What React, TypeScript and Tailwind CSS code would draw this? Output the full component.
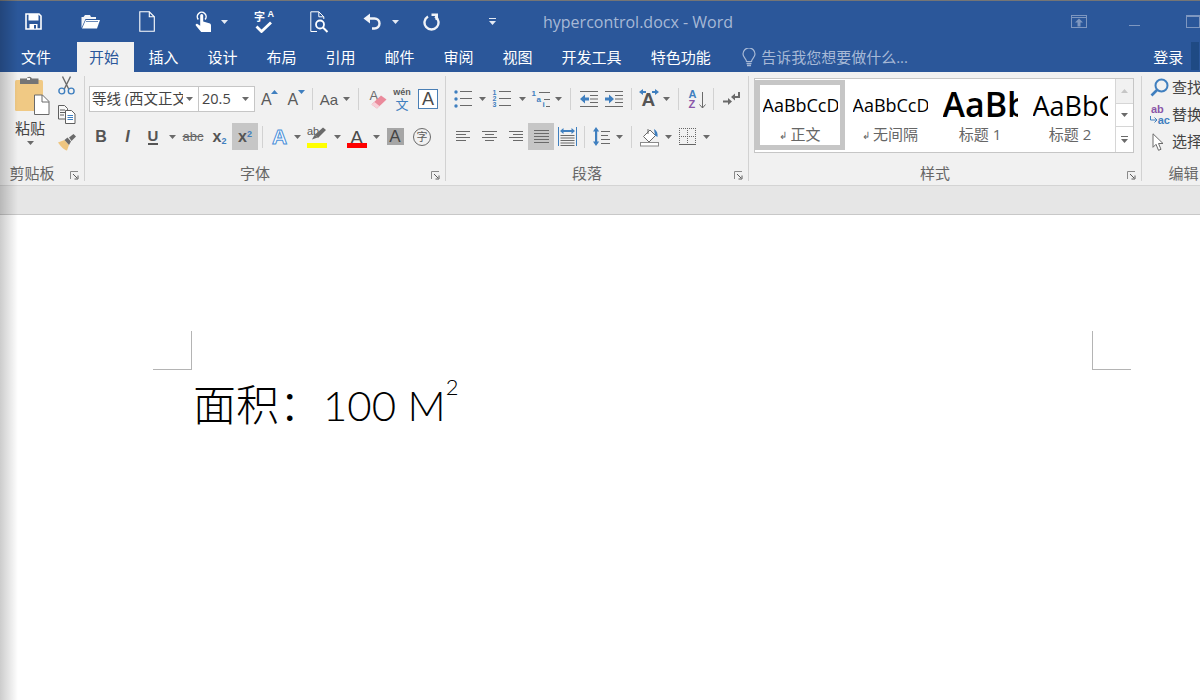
import React from 'react';

const Caret = ({ light = false }: { light?: boolean }) => (
  <svg className="shrink-0" width="7" height="4" viewBox="0 0 7 4"><path d="M0 0h7L3.500 4z" fill={light ? '#e4eaf4' : '#6a6a6a'} /></svg>
);

const Sep = ({ className }: { className: string }) => (
  <div className={`flex h-[26px] items-center justify-center ${className}`}>
    <div className="h-[22px] w-px bg-[#d2d2d2]" />
  </div>
);

const Cell = ({ className, children }: { className: string; children?: React.ReactNode }) => (
  <div className={`flex h-full shrink-0 items-center justify-center ${className}`}>{children}</div>
);

const Launcher = () => (
  <svg width="9" height="9" viewBox="0 0 9 9" fill="none">
    <path d="M0.500 8V0.500H8" stroke="#8a8a8a" />
    <path d="M3 3l4 4M8 4.500V8H4.500" stroke="#5a5a5a" />
  </svg>
);

// strokes for the paragraph alignment and list icons
const Lines = ({ rows, w = 18, h = 16 }: { rows: number[][]; w?: number; h?: number }) => (
  <svg width={w} height={h} viewBox={`0 0 ${w} ${h}`}>
    {rows.map((r, i) => (
      <rect key={i} x={r[0]} y={r[2]} width={r[1] - r[0]} height="1" fill="#6a6a6a" />
    ))}
  </svg>
);

const SaveIcon = () => (
  <svg width="17" height="17" viewBox="0 0 17 17" fill="none">
    <path d="M1 1h13l2 2v13H1z" stroke="#fff" strokeWidth="1.600" />
    <rect x="3.500" y="1" width="10" height="6.500" fill="#fff" />
    <rect x="4.500" y="11" width="8" height="5" fill="#fff" />
    <rect x="9" y="12" width="2" height="3.500" fill="#2b579a" />
  </svg>
);

const OpenIcon = () => (
  <svg width="19" height="15" viewBox="0 0 19 15">
    <path d="M0.500 14V3h2l1.500-2h5l1 2h5v2H4.500z" fill="#f2f4f8" />
    <path d="M1 14.500l3.800-8.500H19l-3 8.500z" fill="#fff" />
    <path d="M5 7.500h12" stroke="#2b579a" strokeWidth="0.700" />
  </svg>
);

const NewIcon = () => (
  <svg width="16" height="21" viewBox="0 0 16 21" fill="none">
    <path d="M0.800 0.800h9.500l5 5v14.400H0.800z" stroke="#fff" strokeWidth="1.100" />
    <path d="M10.300 0.800v5h5" stroke="#fff" strokeWidth="1.100" />
  </svg>
);

const TouchIcon = () => (
  <svg width="17" height="22" viewBox="0 0 17 22" fill="none">
    <path d="M3.300 8.500a4.400 4.400 0 1 1 6.800 0" stroke="#fff" strokeWidth="1.500" />
    <path d="M5.200 4.500a1.500 1.500 0 0 1 3 0v6l6 1.800c1.200.4 1.800 1 1.800 2.200V21H6.200L0.800 14.500c-.5-1 .6-2.200 1.700-1.500l2.700 1.800z" fill="#fff" />
  </svg>
);

const SpellIcon = () => (
  <div className="relative h-[22px] w-[19px] text-white">
    <span className="absolute left-0 top-0 text-[11px] font-bold leading-none">字</span>
    <span className="absolute right-[-1px] top-[-1px] font-['Liberation_Sans',sans-serif] text-[9px] font-bold leading-none">A</span>
    <svg className="absolute bottom-0 left-[1px]" width="17" height="12" viewBox="0 0 17 12" fill="none">
      <path d="M1.500 5.500l5 5L16 1.500" stroke="#fff" strokeWidth="2.800" />
    </svg>
  </div>
);

const PreviewIcon = () => (
  <svg width="19" height="22" viewBox="0 0 19 22" fill="none">
    <path d="M7 20.500H0.800V0.800h8l5 5V8M8.800 0.800v5h5" stroke="#fff" strokeWidth="1" />
    <circle cx="10" cy="13.500" r="4" stroke="#fff" strokeWidth="1.800" />
    <path d="M13 16.500l4.500 4.500" stroke="#fff" strokeWidth="2" />
  </svg>
);

const UndoIcon = () => (
  <svg width="19" height="17" viewBox="0 0 19 17" fill="none">
    <path d="M3 5.500h8.500a5 5 0 0 1 0 10H9" stroke="#f0f3f8" strokeWidth="2.400" />
    <path d="M7 0.500v10L0.500 5.500z" fill="#f0f3f8" />
  </svg>
);

const RedoIcon = () => (
  <svg width="18" height="18" viewBox="0 0 18 18" fill="none">
    <path d="M5 3.500a7 7 0 1 0 7 0" stroke="#f0f3f8" strokeWidth="2.400" />
    <path d="M9 0.500h6.500v6.500H13V3H9z" fill="#f0f3f8" transform="translate(-0.500 0)" />
  </svg>
);

const CustomizeIcon = ({ color }: { color: string }) => (
  <svg width="7" height="7" viewBox="0 0 7 7"><rect width="7" height="1" fill={color} /><path d="M0 3h7L3.500 7z" fill={color} /></svg>
);

const PasteIcon = () => (
  <svg width="36" height="39" viewBox="0 0 36 39">
    <rect x="0" y="4" width="28" height="31" rx="1.500" fill="#f0c984" />
    <path d="M5 5V2.500h6.500a3 3 0 0 1 5.500 0H23.500V8H5z" fill="#757575" />
    <rect x="12" y="2" width="3" height="2" fill="#f1f1f1" />
    <path d="M19.500 19h8l6.500 6.500V38.500H19.500z" fill="#fff" stroke="#6a6a6a" />
    <path d="M27 19v7h7" fill="none" stroke="#6a6a6a" />
  </svg>
);

const CutIcon = () => (
  <svg width="17" height="19" viewBox="0 0 17 19" fill="none">
    <path d="M4.500 0.500l6.200 12.500M12.500 0.500L6.300 13" stroke="#6a6a6a" strokeWidth="1.400" />
    <circle cx="3.800" cy="15" r="2.900" stroke="#3f7fbf" strokeWidth="1.400" />
    <circle cx="13.200" cy="15" r="2.900" stroke="#3f7fbf" strokeWidth="1.400" />
  </svg>
);

const CopyIcon = () => (
  <svg width="18" height="19" viewBox="0 0 18 19" fill="none">
    <path d="M0.500 0.500h6l3 3V14H0.500z" fill="#f7f7f7" stroke="#5f5f5f" />
    <path d="M2 5h5M2 7.500h5M2 10h4" stroke="#5f5f5f" />
    <path d="M7.500 5.500h6l3.500 3.500V18.500H7.500z" fill="#fff" stroke="#5f5f5f" />
    <path d="M9.500 10.500h5.500M9.500 12.500h5.500M9.500 14.500h5.500" stroke="#3f7fbf" />
  </svg>
);

const PainterIcon = () => (
  <svg width="18" height="17" viewBox="0 0 18 17">
    <path d="M0 8.500l6.500-2.500 4.500 5-2 5.500C6 16 2.500 12 0 8.500z" fill="#efc680" />
    <path d="M6.500 6l3-2.500 3.500 4L11 11z" fill="#6a6a6a" />
    <path d="M11 3.500L15.500 0 18 2.500 13.500 7z" fill="#6a6a6a" />
  </svg>
);

const Letter = ({ className, children }: { className: string; children: React.ReactNode }) => (
  <span className={`font-['Liberation_Sans',sans-serif] leading-none ${className}`}>{children}</span>
);

const GrowA = ({ grow }: { grow: boolean }) => (
  <div className="relative h-[18px] w-[15px]">
    <Letter className="absolute bottom-0 left-0 text-[16px] text-[#5a5a5a]">A</Letter>
    <svg className="absolute right-[-2px] top-0" width="7" height="4" viewBox="0 0 7 4">
      <path d={grow ? 'M0 4h7L3.500 0z' : 'M0 0h7L3.500 4z'} fill="#3f7fbf" />
    </svg>
  </div>
);

const ClearIcon = () => (
  <div className="relative h-[20px] w-[16px]">
    <Letter className="absolute left-0 top-0 text-[13px] text-[#6a6a6a]">A</Letter>
    <svg className="absolute bottom-0 left-[1px]" width="16" height="14" viewBox="0 0 16 14">
      <path d="M0.500 9.500L10 0.500l5.500 4L6 13.500z" fill="#ea8a9b" />
      <path d="M0.500 9.500L3.500 7l5 4L6 13.500z" fill="#f7d0d8" />
    </svg>
  </div>
);

const WenIcon = () => (
  <div className="flex h-[22px] w-[18px] flex-col items-center leading-none">
    <span className="font-['Liberation_Sans',sans-serif] text-[9px] font-bold text-[#5a5a5a]">wén</span>
    <span className="mt-[1px] text-[13px] text-[#3f7fbf]">文</span>
  </div>
);

const EffectA = () => (
  <span className="font-['Liberation_Sans',sans-serif] text-[21px] font-bold leading-none text-white [-webkit-text-stroke:1px_#4a90d9]">A</span>
);

const HighlightIcon = () => (
  <div className="relative h-[22px] w-[20px]">
    <Letter className="absolute left-0 top-0 text-[11px] text-[#5a5a5a]">ab</Letter>
    <svg className="absolute left-[4px] top-[1px]" width="16" height="14" viewBox="0 0 16 14">
      <path d="M3.500 8L12 0.500l3 2.500-8 8z" fill="#6a6a6a" />
      <path d="M1 12.500l2.500-4.500 3 2.500z" fill="#6a6a6a" />
    </svg>
    <div className="absolute bottom-0 h-[5px] w-full bg-[#ffff00]" />
  </div>
);

const ColorA = () => (
  <div className="relative h-[22px] w-[20px] text-center">
    <Letter className="text-[19px] text-[#4a4a4a]">A</Letter>
    <div className="absolute bottom-0 h-[5px] w-full bg-[#ff0000]" />
  </div>
);

const CircleChar = () => (
  <div className="flex h-[18px] w-[18px] items-center justify-center rounded-full border border-[#6a6a6a] text-[11px] leading-none text-[#5a5a5a]">字</div>
);

const BulletList = () => (
  <svg width="19" height="18" viewBox="0 0 19 18">
    {[2, 9, 16].map((y) => (
      <g key={y}>
        <circle cx="2" cy={y} r="1.700" fill="#3f7fbf" />
        <rect x="6" y={y - 1} width="12" height="1" fill="#6a6a6a" />
      </g>
    ))}
  </svg>
);

const NumberList = () => (
  <div className="flex h-[18px] w-[19px] items-stretch">
    <div className="flex w-[6px] flex-col justify-between font-['Liberation_Sans',sans-serif] text-[7px] font-bold leading-[6px] text-[#3f7fbf]">
      <span>1</span><span>2</span><span>3</span>
    </div>
    <Lines w={13} h={18} rows={[[0, 12, 1], [0, 12, 8], [0, 12, 15]]} />
  </div>
);

const MultiList = () => (
  <div className="relative h-[19px] w-[19px] font-['Liberation_Sans',sans-serif] text-[8px] font-bold leading-none">
    <span className="absolute left-0 top-0 text-[#3f7fbf]">1</span>
    <span className="absolute left-[5px] top-[6px] text-[#3f7fbf]">a</span>
    <span className="absolute left-[11px] top-[11px] text-[#3f7fbf]">i</span>
    <div className="absolute left-[7px] top-[2px] h-px w-[11px] bg-[#6a6a6a]" />
    <div className="absolute left-[12px] top-[9px] h-px w-[6px] bg-[#6a6a6a]" />
    <div className="absolute left-[14px] top-[16px] h-px w-[4px] bg-[#6a6a6a]" />
  </div>
);

const IndentIcon = ({ inc }: { inc: boolean }) => (
  <svg width="18" height="17" viewBox="0 0 18 17">
    <rect x="0" y="0" width="18" height="1" fill="#6a6a6a" />
    <rect x="0" y="15" width="18" height="1" fill="#6a6a6a" />
    {[4, 7.500, 11].map((y) => <rect key={y} x="10" y={y} width="8" height="1" fill="#6a6a6a" />)}
    <path
      d={inc ? 'M0 6.500h4V3.500L9 8l-5 4.500V9.500H0z' : 'M9 6.500H5V3.500L0 8l5 4.500V9.500h4z'}
      fill="#3f7fbf"
    />
  </svg>
);

const DirectionIcon = () => (
  <div className="relative h-[20px] w-[20px]">
    <svg className="absolute left-0 top-0" width="20" height="8" viewBox="0 0 20 8">
      <path d="M0 3l4-3v2h3v2H4v2zM20 3l-4-3v2h-3v2h3v2z" fill="#3f7fbf" />
    </svg>
    <Letter className="absolute bottom-0 left-[3px] text-[19px] font-bold text-[#555]">A</Letter>
  </div>
);

const SortIcon = () => (
  <div className="relative h-[20px] w-[17px] font-['Liberation_Sans',sans-serif] text-[11px] font-bold leading-[10px]">
    <div className="text-[#3f7fbf]">A</div>
    <div className="text-[#8a56a8]">Z</div>
    <svg className="absolute right-0 top-[3px]" width="7" height="17" viewBox="0 0 7 17" fill="none">
      <path d="M3.500 0v16M0.500 12.500l3 3.500 3-3.500" stroke="#6a6a6a" />
    </svg>
  </div>
);

const MarksIcon = () => (
  <svg width="17" height="14" viewBox="0 0 17 14" fill="none">
    <path d="M16 0v5H9" stroke="#6a6a6a" strokeWidth="2" />
    <path d="M12 1.500v7L8 5zM0 8.500h5V6l4 3.500L5 13v-2.500H0z" fill="#6a6a6a" />
  </svg>
);

const JustifyLines = ({ rows }: { rows: number[][] }) => <Lines w={15} h={13} rows={rows} />;

const DistributedIcon = () => (
  <svg width="19" height="19" viewBox="0 0 19 19">
    <rect x="0" y="0" width="1" height="19" fill="#3f7fbf" />
    <rect x="18" y="0" width="1" height="19" fill="#3f7fbf" />
    <path d="M2 4l3.500-3v2h8V1L17 4l-3.500 3V5h-8v2z" fill="#3f7fbf" />
    {[8, 10.500, 13, 15.500, 18].map((y) => <rect key={y} x="2.500" y={y} width="14" height="1" fill="#6a6a6a" />)}
  </svg>
);

const SpacingIcon = () => (
  <svg width="17" height="19" viewBox="0 0 17 19">
    <path d="M3 0l3.200 4.500H4.200v10h2L3 19 0 14.500h2v-10H0z" fill="#3f7fbf" />
    {[4, 8, 12, 16].map((y) => <rect key={y} x="8" y={y} width={y === 8 ? 7 : 9} height="1" fill="#6a6a6a" />)}
  </svg>
);

const ShadingIcon = () => (
  <svg width="19" height="20" viewBox="0 0 19 20" fill="none">
    <path d="M3.500 9.500L10 3l5.500 5.500L9 15z" fill="#fff" stroke="#6a6a6a" />
    <path d="M8 2v5" stroke="#6a6a6a" />
    <path d="M14 2c3 1.500 4 4.500 3.500 8L15 8.500z" fill="#3f7fbf" />
    <rect x="0.500" y="15.500" width="18" height="3.500" fill="#fff" stroke="#8a8a8a" />
  </svg>
);

const BordersIcon = () => (
  <svg width="17" height="17" viewBox="0 0 17 17" fill="none">
    <path d="M0.500 0V16M8.500 0V16M16.500 0V16M0 0.500H17M0 8.500H17" stroke="#666" strokeDasharray="1 1" />
    <path d="M0 16.500H17" stroke="#666" />
  </svg>
);

const SearchIcon = () => (
  <svg className="shrink-0" width="19" height="19" viewBox="0 0 19 19" fill="none">
    <circle cx="11.500" cy="7.500" r="6" stroke="#3f7fbf" strokeWidth="2" />
    <path d="M7 12L1.500 17.500" stroke="#3f7fbf" strokeWidth="2.600" />
  </svg>
);

const ReplaceIcon = () => (
  <div className="relative h-[20px] w-[20px] shrink-0 font-['Liberation_Sans',sans-serif] text-[11px] font-bold leading-[9px]">
    <span className="absolute left-[1px] top-0 text-[#8a56a8]">ab</span>
    <span className="absolute bottom-0 right-0 text-[#3f7fbf]">ac</span>
    <svg className="absolute bottom-[1px] left-0" width="8" height="8" viewBox="0 0 8 8" fill="none">
      <path d="M0.500 0v4H7M4.500 1.500L7 4 4.500 6.500" stroke="#3f7fbf" />
    </svg>
  </div>
);

const CursorIcon = () => (
  <svg className="shrink-0" width="13" height="18" viewBox="0 0 13 18" fill="none">
    <path d="M1 0.800v13.500l3-3 2.500 6 2.500-1-2.500-5.800h4.500z" fill="#fff" stroke="#6a6a6a" />
  </svg>
);

const Group = ({
  className,
  label,
  launcher = true,
  children,
}: {
  className: string;
  label: string;
  launcher?: boolean;
  children: React.ReactNode;
}) => (
  <div className={`mt-[4px] flex h-[105px] shrink-0 flex-col border-r border-[#d2d2d2] ${className}`}>
    <div className="h-[89px] overflow-hidden">{children}</div>
    <div className="relative h-[16px] pr-[20px] text-center text-[15px] leading-[16px] text-[#666]">
      {label}
      {launcher && (
        <div className="absolute bottom-[1px] right-[5px] flex">
          <Launcher />
        </div>
      )}
    </div>
  </div>
);

const StyleItem = ({
  preview,
  label,
  selected = false,
}: {
  preview: React.ReactNode;
  label: React.ReactNode;
  selected?: boolean;
}) => (
  <div className={`flex h-[70px] w-[90px] shrink-0 flex-col items-center bg-white ${selected ? 'border-[5px] border-[#c6c6c6]' : 'border-[5px] border-white'}`}>
    <div className="flex h-[39px] w-[75px] items-center overflow-hidden whitespace-nowrap">{preview}</div>
    <div className="flex h-[21px] items-center gap-[3px] text-[15px] leading-none text-[#666]">{label}</div>
  </div>
);

const App: React.FC = () => {
  const tabs = ['插入', '设计', '布局', '引用', '邮件', '审阅', '视图', '开发工具', '特色功能'];

  return (
    <div className="relative h-[700px] w-[1200px] overflow-hidden bg-white font-['Open_Sans','Noto_Sans_CJK_SC',sans-serif]">
      {/* title bar */}
      <div className="h-[72px] border-t border-[#757575] bg-[#2b579a]">
        <div className="flex h-[41px] items-center">
          <Cell className="ml-[24px] w-[18px]"><SaveIcon /></Cell>
          <Cell className="ml-[39px] w-[19px]"><OpenIcon /></Cell>
          <Cell className="ml-[39px] w-[16px]"><NewIcon /></Cell>
          <Cell className="ml-[40px] w-[17px]"><TouchIcon /></Cell>
          <Cell className="ml-[9px] w-[7px]"><Caret light /></Cell>
          <Cell className="ml-[26px] w-[19px]"><SpellIcon /></Cell>
          <Cell className="ml-[37px] w-[19px]"><PreviewIcon /></Cell>
          <Cell className="ml-[34px] w-[19px]"><UndoIcon /></Cell>
          <Cell className="ml-[10px] w-[7px]"><Caret light /></Cell>
          <Cell className="ml-[24px] w-[18px]"><RedoIcon /></Cell>
          <Cell className="ml-[48px] w-[7px]"><CustomizeIcon color="#e4eaf4" /></Cell>
          <div className="ml-[47px] w-[200px] whitespace-nowrap text-[16px] text-[#a7b9d6]">hypercontrol.docx - Word</div>
          <Cell className="ml-[334px] w-[16px]">
            <svg width="16" height="13" viewBox="0 0 16 13" fill="none">
              <rect x="0.500" y="0.500" width="15" height="12" stroke="#7e97c0" />
              <path d="M0.500 2.500h15" stroke="#7e97c0" />
              <path d="M8 3.500l4 4h-2.500v4h-3v-4H4z" fill="#7e97c0" />
            </svg>
          </Cell>
          <div className="ml-[42px] mt-[8px] h-[1.500px] w-[12px] bg-[#7e97c0]" />
          <div className="ml-[46px] h-[13px] w-[14px] border border-t-2 border-[#7e97c0]" />
        </div>
        <div className="flex h-[30px] items-center text-[15px] leading-[30px] text-white">
          <div className="ml-[21px] w-[56px]">文件</div>
          <div className="w-[57px] bg-[#f1f1f1] pr-[3px] text-center text-[#2b579a]">开始</div>
          {tabs.map((t) => (
            <div key={t} className="shrink-0 px-[14.500px]">{t}</div>
          ))}
          <Cell className="ml-[16px] w-[16px]">
            <svg width="14" height="19" viewBox="0 0 14 19" fill="none">
              <path d="M4.500 13.500c0-2.500-3.500-4-3.500-7.500a6 6 0 0 1 12 0c0 3.500-3.500 5-3.500 7.500z" stroke="#a7b9d6" strokeWidth="1.200" />
              <path d="M4.500 15.500h5M5 17.500h4" stroke="#a7b9d6" strokeWidth="1.500" />
            </svg>
          </Cell>
          <div className="ml-[4px] w-[392px] text-[#a7b9d6]">告诉我您想要做什么...</div>
          <div>登录</div>
          <div className="ml-[8px] h-[28px] w-[8px] self-start bg-[#1f4a84]" />
        </div>
      </div>

      {/* ribbon */}
      <div className="flex h-[114px] border-b border-[#d4d4d4] bg-[#f1f1f1] text-[#444]">
        <Group className="w-[85px]" label="剪贴板">
          <div className="flex">
            <div className="ml-[14px] w-[44px]">
              <div className="ml-[1px]"><PasteIcon /></div>
              <div className="mt-[3px] w-[32px] text-center text-[15px] leading-[20px]">粘贴</div>
              <div className="ml-[13px] mt-[3px] flex"><Caret /></div>
            </div>
            <div className="flex flex-col gap-[10px]">
              <div className="h-[19px]"><CutIcon /></div>
              <div className="h-[19px]"><CopyIcon /></div>
              <div className="h-[17px]"><PainterIcon /></div>
            </div>
          </div>
        </Group>

        <Group className="w-[361px]" label="字体">
          <div className="ml-[4px] mt-[10px] flex h-[26px] items-center">
            <div className="flex h-[26px] w-[110px] shrink-0 items-center border border-[#c6c6c6] bg-white pl-[2px] pr-[5px] text-[14.500px] leading-none">
              <span className="w-[91px] overflow-hidden whitespace-nowrap">等线 (西文正文)</span>
              <span className="ml-auto flex"><Caret /></span>
            </div>
            <div className="flex h-[26px] w-[56px] shrink-0 items-center border border-l-0 border-[#c6c6c6] bg-white pl-[3px] pr-[5px] text-[14.500px] leading-none">
              20.5
              <span className="ml-auto flex"><Caret /></span>
            </div>
            <Cell className="w-[27px]"><GrowA grow /></Cell>
            <Cell className="w-[26px]"><GrowA grow={false} /></Cell>
            <Sep className="w-[8px]" />
            <Cell className="w-[26px]"><Letter className="text-[15px] text-[#5a5a5a]">Aa</Letter></Cell>
            <Cell className="w-[8px]"><Caret /></Cell>
            <Sep className="w-[16px]" />
            <Cell className="w-[23px]"><ClearIcon /></Cell>
            <Cell className="w-[26px]"><WenIcon /></Cell>
            <Cell className="w-[26px]">
              <div className="flex h-[20px] w-[20px] items-center justify-center border border-[#4a7fb5] bg-white font-['Liberation_Sans',sans-serif] text-[18px] leading-none text-[#4a4a4a]">A</div>
            </Cell>
          </div>
          <div className="ml-[3px] mt-[11px] flex h-[27px] items-center">
            <Cell className="w-[26px]"><Letter className="text-[16px] font-bold text-[#555]">B</Letter></Cell>
            <Cell className="w-[27px]"><Letter className="text-[16px] font-bold italic text-[#555]">I</Letter></Cell>
            <Cell className="w-[24px]"><Letter className="border-b-2 border-[#555] text-[15px] font-bold text-[#555]">U</Letter></Cell>
            <Cell className="w-[14px]"><Caret /></Cell>
            <Cell className="w-[28px]"><Letter className="text-[13px] text-[#666] line-through">abc</Letter></Cell>
            <Cell className="w-[25px]">
              <Letter className="text-[16px] font-bold text-[#555]">x<sub className="text-[9px] text-[#3f7fbf]">2</sub></Letter>
            </Cell>
            <Cell className="w-[26px] bg-[#c6c6c6]">
              <Letter className="text-[16px] font-bold text-[#555]">x<sup className="text-[9px] text-[#3f7fbf]">2</sup></Letter>
            </Cell>
            <Sep className="w-[8px]" />
            <Cell className="w-[27px]"><EffectA /></Cell>
            <Cell className="w-[8px]"><Caret /></Cell>
            <Cell className="w-[32px]"><HighlightIcon /></Cell>
            <Cell className="w-[8px]"><Caret /></Cell>
            <Cell className="w-[31px]"><ColorA /></Cell>
            <Cell className="w-[8px]"><Caret /></Cell>
            <Cell className="w-[30px]">
              <div className="flex h-[17px] w-[17px] items-center justify-center bg-[#a6a6a6] font-['Liberation_Sans',sans-serif] text-[17px] leading-none text-[#444]">A</div>
            </Cell>
            <Cell className="w-[24px]"><CircleChar /></Cell>
          </div>
        </Group>

        <Group className="w-[303px]" label="段落">
          <div className="ml-[4px] mt-[10px] flex h-[26px] items-center">
            <Cell className="w-[26px]"><BulletList /></Cell>
            <Cell className="w-[12px]"><Caret /></Cell>
            <Cell className="w-[28px]"><NumberList /></Cell>
            <Cell className="w-[12px]"><Caret /></Cell>
            <Cell className="w-[26px]"><MultiList /></Cell>
            <Cell className="w-[8px]"><Caret /></Cell>
            <Sep className="w-[16px]" />
            <Cell className="w-[22px]"><IndentIcon inc={false} /></Cell>
            <Cell className="w-[27px]"><IndentIcon inc /></Cell>
            <Sep className="w-[8px]" />
            <Cell className="w-[27px]"><DirectionIcon /></Cell>
            <Cell className="w-[8px]"><Caret /></Cell>
            <Sep className="w-[16px]" />
            <Cell className="w-[22px]"><SortIcon /></Cell>
            <Sep className="w-[10px]" />
            <Cell className="w-[26px]"><MarksIcon /></Cell>
          </div>
          <div className="ml-[4px] mt-[11px] flex h-[27px] items-center">
            <Cell className="w-[26px]"><JustifyLines rows={[[0, 14, 1], [0, 10, 4], [0, 14, 7], [0, 10, 10]]} /></Cell>
            <Cell className="w-[26px]"><JustifyLines rows={[[0, 15, 1], [3, 12, 4], [0, 15, 7], [3, 12, 10]]} /></Cell>
            <Cell className="w-[26px]"><JustifyLines rows={[[1, 15, 1], [5, 15, 4], [1, 15, 7], [5, 15, 10]]} /></Cell>
            <Cell className="w-[26px] bg-[#c6c6c6]"><JustifyLines rows={[[0, 15, 0], [0, 15, 3], [0, 15, 6], [0, 15, 9], [0, 15, 12]]} /></Cell>
            <Cell className="w-[26px]"><DistributedIcon /></Cell>
            <Sep className="w-[8px]" />
            <Cell className="w-[26px]"><SpacingIcon /></Cell>
            <Cell className="w-[10px]"><Caret /></Cell>
            <Sep className="w-[14px]" />
            <Cell className="w-[22px]"><ShadingIcon /></Cell>
            <Cell className="w-[16px]"><Caret /></Cell>
            <Cell className="w-[22px]"><BordersIcon /></Cell>
            <Cell className="w-[16px]"><Caret /></Cell>
          </div>
        </Group>

        <Group className="w-[393px]" label="样式">
          <div className="ml-[5px] mt-[2px] flex h-[75px] w-[380px] border border-[#c6c6c6] bg-white">
            <div className="flex h-full w-[361px] items-start pt-px">
              <StyleItem
                selected
                label={<><span className="text-[10px]">↲</span>正文</>}
                preview={<span className="mt-[1px] text-[18px] leading-none text-black">AaBbCcDd</span>}
              />
              <StyleItem
                label={<><span className="text-[10px]">↲</span>无间隔</>}
                preview={<span className="mt-[1px] text-[18px] leading-none text-black">AaBbCcDd</span>}
              />
              <StyleItem
                label="标题 1"
                preview={<span className="mt-[-2px] text-[34px] font-semibold leading-none text-black">AaBbC</span>}
              />
              <StyleItem
                label="标题 2"
                preview={<span className="mt-[1px] text-[27px] leading-none text-black">AaBbCc</span>}
              />
            </div>
            <div className="flex w-[18px] flex-col border-l border-[#d6d6d6]">
              <div className="flex h-[25px] items-center justify-center border-b border-[#d6d6d6] bg-[#f1f1f1]">
                <svg width="7" height="4" viewBox="0 0 7 4"><path d="M0 4h7L3.500 0z" fill="#c6c6c6" /></svg>
              </div>
              <div className="flex h-[23px] items-center justify-center border-b border-[#d6d6d6]"><Caret /></div>
              <div className="flex flex-1 items-center justify-center"><CustomizeIcon color="#6a6a6a" /></div>
            </div>
          </div>
        </Group>

        <Group className="w-[104px]" label="编辑" launcher={false}>
          <div className="ml-[8px] mt-[2px] flex flex-col gap-[8px] whitespace-nowrap text-[15px] leading-[19px] text-[#444]">
            <div className="flex h-[19px] items-center gap-[3px]"><SearchIcon />查找</div>
            <div className="flex h-[19px] items-center gap-[2px]"><ReplaceIcon />替换</div>
            <div className="flex h-[19px] items-center gap-[7px] pl-[2px]"><CursorIcon />选择</div>
          </div>
        </Group>
      </div>

      {/* ruler band */}
      <div className="h-[29px] border-b border-[#c8c8c8] bg-[#e6e6e6]" />

      {/* page */}
      <div className="pt-[116px]">
        <div className="flex justify-between pl-[153px] pr-[69px]">
          <div className="h-[39px] w-[39px] border-b border-r border-[#b4b4b4]" />
          <div className="h-[39px] w-[39px] border-b border-l border-[#b4b4b4]" />
        </div>
        <div className="ml-[193px] mt-[5px] whitespace-nowrap text-[43px] font-light leading-[60px] text-black">
          面积：<span className="ml-[1px] font-['Lato','Liberation_Sans',sans-serif] text-[42px]">100 M</span>
          <sup className="top-[-26px] font-['Lato','Liberation_Sans',sans-serif] text-[22px]">2</sup>
        </div>
      </div>

      {/* window shadow on the left edge */}
      <div className="pointer-events-none absolute bottom-0 left-0 top-0 w-[18px] bg-linear-to-r from-black/20 to-transparent" />
    </div>
  );
};

export default App;
